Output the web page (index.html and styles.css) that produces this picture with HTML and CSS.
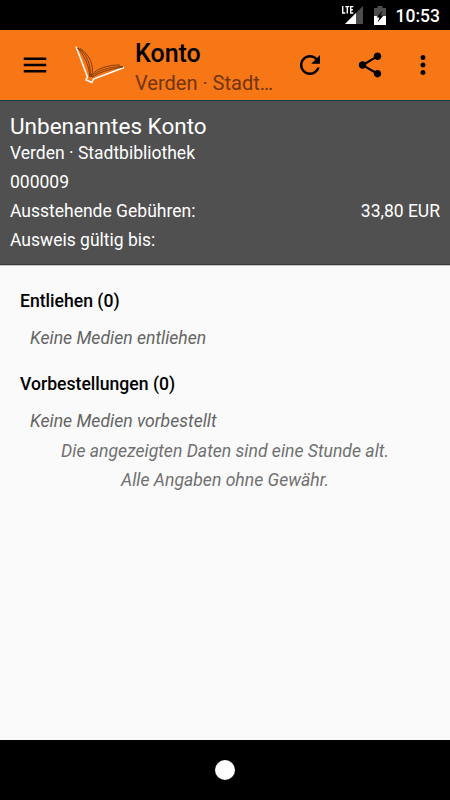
FILE: index.html
```html
<!DOCTYPE html>
<html lang="de">
<head>
  <meta charset="utf-8">
  <meta name="viewport" content="width=device-width, initial-scale=1">
  <title>Konto</title>
  <link rel="stylesheet" href="styles.css">
</head>
<body>
  <div class="statusbar">
    <svg class="signal" width="24" height="20" viewBox="0 0 24 20">
      <path d="M22 1v18H4z" fill="#4d4d4d"/>
      <path d="M15 8v11H4z" fill="#fff"/>
      <path d="M0 0h13v9H0z" fill="#000"/>
      <path d="M1.700 1v7h2.600M4.300 1.600h4M6.300 1.600V8.600M12.300 1.600H9.700V8h2.600M9.700 4.700h2.200" fill="none" stroke="#fff" stroke-width="1.400"/>
    </svg>
    <svg class="battery" width="12" height="19" viewBox="0 0 12 19">
      <path d="M3.500 0h5v2H12v17H0V2h3.500z" fill="#4d4d4d"/>
      <path d="M0 10h12v9H0z" fill="#fff"/>
      <path d="M8.500 4.500L2.500 11.500h3L3.500 16.500l6-7H6.500z" fill="#000"/>
    </svg>
    <span class="clock">10:53</span>
  </div>

  <header class="toolbar">
    <button class="icon-button menu" aria-label="Menü">
      <svg width="30" height="30" viewBox="0 0 24 24"><path d="M3 18h18v-2H3v2zm0-5h18v-2H3v2zm0-7v2h18V6H3z"/></svg>
    </button>
    <svg class="logo" width="52" height="42" viewBox="0 0 52 42" fill="none">
      <path d="M2 2.500L13.500 33L12 36L17.800 38.500L19.500 35L50 23.500" stroke="#fff" stroke-width="1.500"/>
      <path d="M3 4C9 9 15.500 21 15.700 33M4 4C13 10 16.800 20 16.300 33M6 4.500C15 10 21 21 17.300 33" stroke="#63300c" stroke-width="0.800"/>
      <path d="M18 33.500C25 28 35 25.500 49 23M18 32.500C24 26 35 23 49 22.500M17.500 31.500C23 24 34 21 46 21" stroke="#63300c" stroke-width="0.800"/>
    </svg>
    <div class="titles">
      <h1>Konto</h1>
      <div class="subtitle">Verden · Stadt…</div>
    </div>
    <button class="icon-button refresh" aria-label="Aktualisieren">
      <svg width="30" height="30" viewBox="0 0 24 24"><path d="M17.650 6.350C16.200 4.900 14.210 4 12 4c-4.420 0-7.990 3.580-7.990 8s3.570 8 7.990 8c3.730 0 6.840-2.550 7.730-6h-2.080c-.820 2.330-3.040 4-5.650 4-3.310 0-6-2.690-6-6s2.690-6 6-6c1.660 0 3.140.690 4.220 1.780L13 11h7V4l-2.350 2.350z"/></svg>
    </button>
    <button class="icon-button share" aria-label="Teilen">
      <svg width="30" height="30" viewBox="0 0 24 24"><path d="M18 16.080c-.760 0-1.440.300-1.960.770L8.910 12.700c.050-.230.090-.460.090-.700s-.040-.470-.090-.700l7.050-4.110c.540.500 1.250.810 2.040.810 1.660 0 3-1.340 3-3s-1.340-3-3-3-3 1.340-3 3c0 .240.040.470.090.700L8.040 9.810C7.500 9.310 6.790 9 6 9c-1.660 0-3 1.340-3 3s1.340 3 3 3c.790 0 1.500-.310 2.040-.810l7.120 4.160c-.050.210-.080.430-.080.650 0 1.610 1.310 2.920 2.920 2.920s2.920-1.310 2.920-2.920-1.310-2.920-2.920-2.920z"/></svg>
    </button>
    <button class="icon-button more" aria-label="Mehr">
      <svg width="30" height="30" viewBox="0 0 24 24"><path d="M12 8c1.100 0 2-.900 2-2s-.900-2-2-2-2 .900-2 2 .900 2 2 2zm0 2c-1.100 0-2 .900-2 2s.900 2 2 2 2-.900 2-2-.900-2-2-2zm0 6c-1.100 0-2 .900-2 2s.900 2 2 2 2-.900 2-2-.900-2-2-2z"/></svg>
    </button>
  </header>

  <section class="account">
    <h2>Unbenanntes Konto</h2>
    <div class="row"><span>Verden · Stadtbibliothek</span></div>
    <div class="row"><span>000009</span></div>
    <div class="row"><span>Ausstehende Gebühren:</span><span>33,80 EUR</span></div>
    <div class="row"><span>Ausweis gültig bis:</span></div>
  </section>

  <main class="content">
    <h3>Entliehen (0)</h3>
    <p class="empty">Keine Medien entliehen</p>
    <h3>Vorbestellungen (0)</h3>
    <p class="empty">Keine Medien vorbestellt</p>
    <p class="note">Die angezeigten Daten sind eine Stunde alt.</p>
    <p class="note">Alle Angaben ohne Gewähr.</p>
  </main>

  <nav class="navbar">
    <span class="home"></span>
  </nav>
</body>
</html>
```
FILE: styles.css
```css
* {
  box-sizing: border-box;
}

body {
  margin: 0;
  height: 800px;
  display: flex;
  flex-direction: column;
  font-family: Roboto, sans-serif;
  font-size: 17.5px;
  background: #fafafa;
  color: #000;
}

h1, h2, h3, p {
  margin: 0;
}

.statusbar {
  height: 30px;
  display: flex;
  align-items: center;
  justify-content: flex-end;
  padding-right: 10px;
  background: #000;
  color: #fff;
}

.battery {
  margin: 0 10px 0 9px;
}

.clock {
  font-size: 17.5px;
  font-weight: 500;
  line-height: 30px;
  padding-top: 1px;
}

.toolbar {
  height: 70px;
  display: flex;
  align-items: center;
  background: #f77616;
}

.icon-button {
  width: 60px;
  height: 60px;
  padding: 0;
  border: none;
  background: none;
  display: flex;
  align-items: center;
  justify-content: center;
  flex: none;
}

.menu {
  width: 70px;
}

.logo {
  flex: none;
  margin-left: 4px;
}

.titles {
  flex: 1;
  min-width: 0;
  margin-left: 9px;
  white-space: nowrap;
}

.titles h1 {
  font-size: 25px;
  font-weight: 500;
  line-height: 29px;
  padding-top: 6px;
}

.subtitle {
  font-size: 20px;
  line-height: 30px;
  color: #713509;
}

.more {
  width: 45px;
  margin-right: 5px;
}

.account {
  height: 165px;
  padding: 12px 10px 0;
  background: #505050;
  border-top: 1px solid #073f4b;
  border-bottom: 1px solid #3c3c3c;
  color: #fff;
}

.account h2 {
  font-size: 22.5px;
  font-weight: 400;
  line-height: 27px;
}

.row {
  display: flex;
  justify-content: space-between;
  line-height: 21px;
  margin-bottom: 8px;
}

.row:nth-child(2) {
  padding-top: 3px;
}

.content {
  flex: 1;
  padding: 25px 20px 0;
  border-top: 1px solid #c4c4c4;
}

.content h3 {
  font-size: 17.6px;
  font-weight: 500;
  line-height: 21px;
}

.empty {
  padding: 16px 10px 25px;
  line-height: 21px;
  font-size: 17.6px;
  font-style: italic;
  color: #646464;
}

.empty + .note {
  margin-top: -16px;
}

.note {
  line-height: 21px;
  margin-bottom: 8px;
  text-align: center;
  font-size: 17.6px;
  font-style: italic;
  color: #707070;
}

.navbar {
  height: 60px;
  display: flex;
  align-items: center;
  justify-content: center;
  background: #000;
}

.home {
  width: 20px;
  height: 20px;
  border-radius: 50%;
  background: #fff;
}
```
